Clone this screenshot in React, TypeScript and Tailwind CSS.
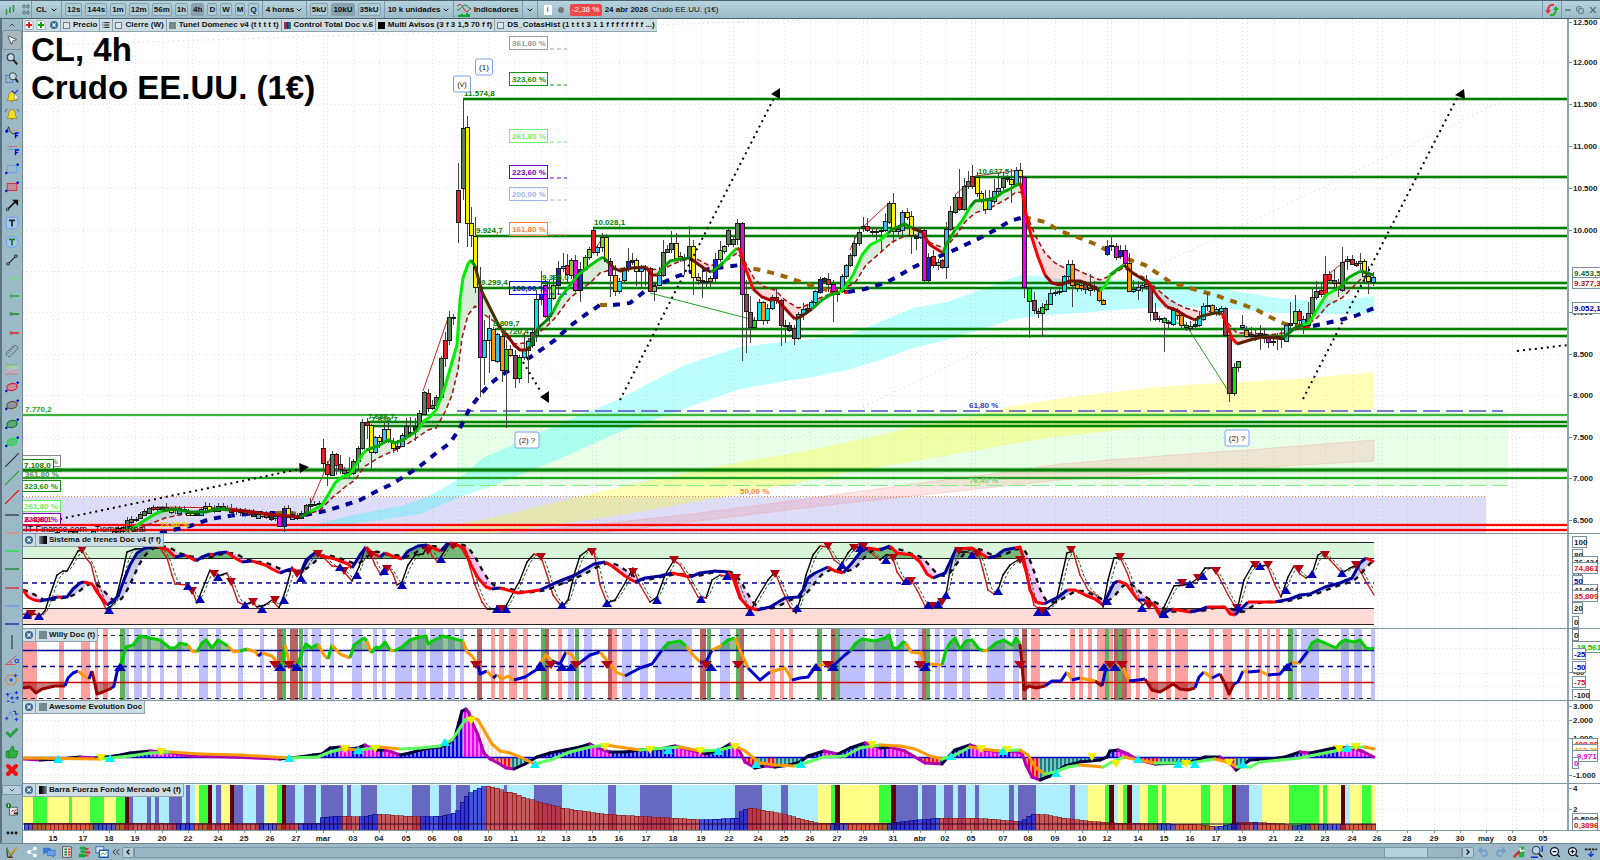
import type { ReactNode } from "react";
import { ChevronDown, ChevronUp, ChevronsLeft, ChevronLeft, ChevronRight, List, Minus, Copy, X, MousePointer2, Undo2, Redo2, ZoomIn, ZoomOut, Ruler, Share2, ThumbsUp, Check, Ellipsis } from "lucide-react";

type Pt = [number, number];
type Seg = { c: string; pts: Pt[] };

const GREEN = "#008000";

const toPts = (s: string): Pt[] => s.trim().split(/\s+/).map((p) => p.split(",").map(Number) as Pt);
const toSegs = (s: string): Seg[] =>
  s.trim().split("|").map((part) => {
    const [c, rest] = part.trim().split(":");
    return { c, pts: toPts(rest) };
  });
const join = (segs: Seg[]) => segs.flatMap((s) => s.pts);
const str = (pts: Pt[]) => pts.map((p) => p.join(",")).join(" ");

// linear interpolation of a series at x
const at = (pts: Pt[], x: number) => {
  if (x <= pts[0][0]) return pts[0][1];
  for (let i = 1; i < pts.length; i++) {
    if (x <= pts[i][0]) {
      const [x0, y0] = pts[i - 1];
      const [x1, y1] = pts[i];
      return x1 === x0 ? y1 : y0 + ((y1 - y0) * (x - x0)) / (x1 - x0);
    }
  }
  return pts[pts.length - 1][1];
};

const range = (a: number, b: number, step: number) => {
  const out: number[] = [];
  for (let x = a; x < b; x += step) out.push(x);
  return out;
};

const lag = (pts: Pt[], n: number): Pt[] =>
  range(23, 1374, 3).map((x) => {
    const v = range(0, n, 2).map((k) => at(pts, x - k));
    return [x, v.reduce((a, b) => a + b, 0) / v.length];
  });

/* ---------- data ---------- */

const DAYS: [number, string][] = [
  [53, "15"], [83, "17"], [109, "18"], [135, "19"], [162, "20"], [188, "22"], [218, "24"], [244, "25"], [270, "26"], [296, "27"],
  [323, "mar"], [353, "03"], [379, "04"], [406, "05"], [432, "06"], [458, "08"], [488, "10"], [514, "11"], [541, "12"], [566, "13"],
  [592, "15"], [619, "16"], [646, "17"], [673, "18"], [701, "19"], [729, "22"], [758, "24"], [784, "25"], [810, "26"], [837, "27"],
  [863, "29"], [893, "31"], [920, "abr"], [945, "02"], [971, "05"], [1003, "07"], [1028, "08"], [1055, "09"], [1082, "10"], [1107, "12"],
  [1138, "14"], [1164, "15"], [1190, "16"], [1216, "17"], [1242, "19"], [1273, "21"], [1299, "22"], [1325, "23"], [1352, "24"], [1377, "26"],
  [1407, "28"], [1434, "29"], [1460, "30"], [1486, "may"], [1512, "03"], [1543, "05"],
];
const EXTRA_DAYS = [26, 57, 192, 327, 462, 596, 733, 867, 975, 1111, 1247, 1382, 1516];

const CANDLE_COLORS: Record<string, string> = {
  g: "#5c7c5c", r: "#ee1c24", y: "#ffee00", m: "#f000f0", c: "#00e5ee", s: "#36bff5", o: "#ff9800",
  l: "#00ee00", G: "#7ed048", b: "#2222d8", p: "#8a4456", k: "#333333",
};

// x high top bottom low colour
const CANDLES = `
57 531 532 533 533 r;70 530 531 533 533 o;75 530 531 533 533 g;93 530 531 533 533 c;114 529 531 533 533 o;118 526 528 533 533 g;123 524 527 531 533 g;
127 517 520 529 531 g;131 516 519 522 524 g;136 517 519 520 522 g;140 512 514 518 519 g;144 509 511 515 516 g;149 507 508 513 514 g;153 505 507 509 511 r;157 506 507 509 512 r;162 506 507 509 511 k;166 503 507 509 511 r;
171 507 508 512 514 y;175 506 508 510 514 g;179 506 508 513 515 s;184 506 509 510 512 k;188 509 513 515 516 y;192 511 513 515 516 y;197 510 513 515 516 k;201 507 509 515 516 s;205 502 506 508 511 g;209 503 506 510 511 y;214 505 508 511 513 s;
218 503 506 511 512 g;223 503 506 508 510 g;227 505 508 509 511 y;231 504 509 512 517 r;236 507 509 511 515 k;240 508 510 512 516 y;245 508 510 513 517 g;249 509 511 514 516 r;253 509 512 516 517 k;258 512 514 518 519 s;262 511 513 516 518 o;266 511 514 517 519 r;
271 512 515 519 521 k;275 512 516 518 521 s;279 513 516 526 527 m;284 506 508 526 532 b;288 505 508 517 518 y;292 511 514 519 520 s;297 513 515 518 520 r;301 511 513 518 519 b;306 504 505 514 516 g;310 498 504 506 510 k;314 501 504 505 506 g;319 501 503 504 506 g;
323 439 448 463 470 r;327 461 464 474 486 r;332 451 454 475 476 g;336 453 454 465 475 r;340 455 464 469 474 r;344 467 470 473 479 g;349 457 472 474 477 k;353 459 461 473 475 g;358 446 448 461 470 g;362 419 422 448 450 g;367 418 422 425 439 r;
371 424 425 452 470 y;375 436 437 452 454 s;379 435 437 441 448 y;384 423 429 442 444 s;388 420 429 441 443 y;393 438 441 448 453 y;397 440 446 448 452 k;402 433 435 446 447 s;406 418 426 436 438 g;410 417 432 434 437 k;415 418 426 430 441 k;419 410 413 426 428 g;
424 391 392 414 415 g;428 389 393 408 412 r;432 400 405 408 410 g;436 395 397 405 409 g;441 356 358 397 400 g;445 332 340 358 367 r;449 311 317 340 345 g;453 314 317 318 325 k;
458 163 190 222 243 r;463 99 128 188 200 g;467 116 127 223 247 y;471 207 223 235 247 y;475 217 236 287 293 y;480 267 287 357 397 m;484 320 340 357 385 c;489 315 328 340 373 s;493 327 329 360 361 o;497 333 334 361 363 s;502 333 336 370 382 o;
506 340 349 370 428 l;510 345 349 355 357 o;515 350 355 378 388 p;519 355 357 378 383 l;524 333 349 357 360 c;528 338 341 350 383 c;532 328 332 345 348 p;536 290 299 335 342 c;541 271 294 299 305 b;545 280 285 316 318 m;549 280 298 316 322 c;
553 275 285 298 300 G;558 261 268 285 295 b;563 253 266 268 272 s;567 254 265 274 282 r;571 258 260 275 279 G;575 255 260 290 292 m;580 262 269 290 302 b;585 255 257 269 271 G;589 247 249 257 260 G;593 229 230 252 254 r;597 245 247 252 256 s;602 233 237 247 252 G;
606 234 237 261 263 y;610 258 261 275 297 m;615 265 275 291 296 o;619 278 281 291 294 c;624 267 269 280 282 s;628 248 261 269 272 b;632 253 260 262 265 k;636 258 260 271 286 y;641 265 267 271 287 s;645 265 267 269 286 k;650 267 268 291 292 r;654 283 286 291 301 G;
659 267 275 285 286 s;663 240 252 275 277 g;667 245 249 252 253 g;671 231 243 249 253 g;676 233 243 258 261 y;680 252 256 258 262 y;684 254 257 258 275 k;689 226 246 257 270 g;693 240 246 277 295 y;698 273 277 280 285 o;702 265 280 282 298 k;706 272 281 282 287 o;
710 276 278 281 287 o;715 253 259 278 283 b;720 241 250 259 262 G;724 245 246 251 254 G;728 229 230 244 247 g;733 237 239 244 247 g;737 219 223 239 245 g;742 222 223 294 361 m;746 280 294 311 353 p;750 296 312 327 343 p;754 317 320 327 328 l;
759 299 302 320 321 c;763 301 302 320 325 o;767 304 308 320 324 c;772 295 297 308 310 c;776 288 297 300 304 o;781 299 300 325 346 p;785 320 325 326 343 k;789 322 325 330 332 k;794 325 328 338 345 p;798 312 314 338 340 c;
803 303 309 314 320 c;807 305 308 310 314 k;811 300 302 308 310 c;815 290 291 302 304 c;820 277 279 292 294 b;824 277 278 281 283 k;828 273 279 284 292 r;833 280 284 291 322 m;837 289 291 294 302 k;842 274 276 291 293 s;846 264 265 276 279 s;
850 253 255 265 267 g;854 236 243 255 257 g;859 228 232 243 246 g;863 217 226 228 232 k;867 218 226 230 232 r;872 228 231 232 236 k;876 227 231 232 243 k;881 227 230 231 251 k;885 213 221 230 232 s;889 201 203 222 224 g;893 193 203 231 243 y;
898 226 229 231 235 s;902 210 212 230 235 s;907 208 212 217 220 y;911 211 216 235 254 y;916 235 236 238 250 k;920 227 230 237 239 s;924 228 230 280 282 m;928 253 257 280 282 b;933 250 256 265 268 r;938 259 262 265 270 G;942 259 260 267 269 r;
946 222 229 267 279 s;950 206 211 229 231 g;955 195 197 212 214 g;959 169 197 209 211 r;964 178 186 209 211 g;968 171 181 186 189 g;972 165 176 186 189 r;977 172 177 193 197 y;981 191 193 199 203 y;985 190 199 209 214 y;989 190 200 209 210 s;
994 179 191 201 204 s;998 173 188 191 194 s;1003 172 178 187 190 g;1007 175 177 179 182 k;1011 169 179 184 203 y;1016 167 170 185 187 s;1020 163 170 176 187 y;1024 176 177 287 298 m;1029 287 288 301 338 l;1034 292 300 310 314 p;
1038 308 311 313 318 p;1042 303 307 313 337 l;1046 300 304 309 311 l;1050 288 293 304 305 c;1055 290 292 293 296 k;1059 289 291 292 295 k;1064 275 276 291 292 c;1068 260 264 276 280 c;1072 260 264 285 307 o;1077 280 284 288 292 o;1081 281 285 288 291 o;
1085 281 284 289 294 p;1090 274 288 290 296 o;1094 281 286 289 292 s;1099 287 289 300 302 o;1103 299 300 304 305 o;1107 240 246 254 256 b;1111 237 245 246 251 k;1116 243 246 257 260 m;1120 245 250 256 259 b;1125 245 250 263 266 m;1129 253 263 291 292 o;
1133 280 289 291 293 c;1138 281 287 290 300 s;1142 283 285 287 292 c;1146 275 284 286 290 o;1150 284 286 312 321 p;1155 303 312 319 321 p;1159 316 318 319 322 k;1164 317 318 322 352 l;1168 320 322 323 328 k;1173 307 310 324 326 c;
1177 308 310 315 320 o;1181 312 315 325 330 o;1186 322 325 327 331 l;1190 321 326 328 331 l;1195 318 324 326 328 k;1199 311 316 325 327 c;1203 303 306 319 321 c;1207 293 305 306 311 k;1212 304 305 312 315 o;1216 307 309 313 316 c;1221 306 308 311 315 c;
1225 307 308 335 337 p;1229 335 335 393 402 p;1234 363 367 393 396 l;1238 361 361 367 372 l;1242 315 325 327 330 c;1246 326 330 336 338 o;1251 327 334 336 338 k;1255 330 335 336 341 k;1260 325 333 335 350 k;1264 328 334 338 343 k;1268 334 336 342 348 m;
1273 334 341 342 346 o;1277 333 336 338 350 k;1281 330 337 339 348 k;1286 323 325 341 342 c;1290 302 323 325 328 k;1295 295 311 323 326 G;1299 309 311 320 325 r;1303 316 319 326 334 s;1308 302 313 325 327 g;1312 289 297 313 316 g;1316 281 291 297 300 g;
1321 283 290 294 297 r;1325 256 274 294 296 r;1329 271 274 280 282 r;1334 270 280 283 288 p;1338 279 283 289 297 y;1342 247 262 290 292 g;1347 256 259 261 270 g;1352 255 259 264 265 r;1356 261 263 265 267 r;1360 253 261 263 270 G;1364 259 261 276 283 y;
1368 266 276 281 294 y;1373 272 277 282 286 s`
  .trim().split(";").map((row) => {
    const [x, hi, top, bot, lo, c] = row.trim().split(" ");
    return { x: +x, hi: +hi, top: +top, bot: +bot, lo: +lo, c };
  });

const FAST = toSegs(`#00e000:125,531 135,527 145,520 155,514 162,511|#008c00:175,509 190,512 205,512 218,509 230,510|#a00000:245,511 260,513 275,515 290,516 300,517|#008c00:310,512|#00f000:322,505 328,495 335,483 342,477 350,474 356,465 362,455 366,450|#00a800:378,446 388,440 395,443 403,440 412,434 418,430|#00f000:424,421 430,417 436,410 444,390 452,362 457,345 460,300 463,278 468,264 471,260|#008c00:475,266|#4a3000:482,292 490,308 497,322 502,330|#8b0000:508,336 514,345 520,350 526,350|#4a3000:530,347|#0a7a0a:538,328 547,320 553,312|#00c800:560,298 568,288 578,275 588,267 598,260 603,257|#0a7a0a:608,262|#5a2000:614,268 620,271 632,268 646,267|#a00000:652,275 657,275|#00a800:663,268 670,261 680,259|#0a7a0a:690,258|#6a1500:698,264 705,269 711,272|#00a800:718,267 724,262|#00e000:730,255 737,248|#ff0000:740,250 743,262 748,275 753,289|#a00000:762,297 770,300 776,299 782,305 790,314 795,319|#5a2000:802,316 812,309|#00a800:822,300 830,295 840,292|#00f000:845,287 853,275 862,255 870,245 880,240 888,233|#008c00:893,229 905,224 912,228|#5a2000:922,232|#d00000:930,245 943,253|#00a800:946,245 955,230|#00e000:962,221 970,207|#008c00:975,201 985,200 995,198|#00a800:1003,192 1010,189 1020,183|#ff0000:1022,190 1026,215 1031,235 1038,257 1045,275|#a00000:1052,283 1060,285|#6a1500:1070,281 1080,281 1090,285 1100,291|#00f000:1106,285 1110,275|#00a800:1118,269 1124,265|#6a1500:1134,274 1146,281|#d00000:1150,285 1158,297 1167,307|#8b0000:1176,310 1186,316 1195,320|#4a3000:1202,316 1215,313 1222,313|#ff0000:1226,323 1232,338 1237,344|#5a2000:1250,340 1262,337 1275,338 1283,338|#0a7a0a:1295,328 1303,325|#00f000:1309,323 1318,308 1326,295 1335,290|#00a800:1342,286 1348,278 1355,274 1361,271|#0a7a0a:1373,275`);

const SLOW = toPts(`125,535 145,526 165,518 185,514 205,512 218,510 240,510 270,515 300,517 320,510 332,498 345,487 355,480 365,466 380,457 395,450 407,444 418,437 428,430 436,428 445,412 452,395 458,370 462,338 468,315 475,306 485,315 495,322 505,336 515,344 525,343 535,335 545,328 555,318 570,298 580,290 590,283 600,273 610,270 625,268 650,270 665,268 680,261 695,258 708,265 720,265 730,258 737,253 745,262 755,280 765,287 775,290 785,300 798,308 805,306 820,298 840,290 855,283 866,265 880,253 892,242 905,236 915,235 925,240 935,245 945,248 955,237 965,222 975,213 990,208 1005,200 1015,193 1021,192 1027,215 1035,235 1045,253 1055,263 1065,268 1075,269 1090,276 1100,280 1110,276 1123,268 1132,272 1145,278 1158,290 1170,300 1185,308 1200,312 1215,311 1225,320 1237,333 1250,333 1270,335 1290,332 1305,326 1317,318 1328,305 1342,298 1352,288 1362,278 1373,278`);

const TREND = toSegs(`#000096:160,533 190,526 210,519 235,515 258,513 275,513|#996600:290,513 305,515|#000096:325,511 345,505 360,500 375,492 390,485 405,476 420,466 435,454 450,443 460,428 470,408 480,395 490,384 500,376 510,370 520,364 532,356 545,347 555,340 570,326 585,315 600,305|#996600:613,305|#000096:630,303 645,291 660,284 675,277 690,272 710,269 725,267 740,265|#996600:750,268 765,271 780,275 795,280 810,285 830,291|#ff0000:848,292|#000096:865,289 885,283 895,278 910,269 922,263 935,258 950,252 965,245 980,238 995,230 1010,221 1024,217|#996600:1045,222 1060,231 1080,238 1095,244 1110,252 1130,260 1145,265 1160,275 1170,282 1190,288 1200,291 1215,295 1235,302 1255,309 1270,317 1285,324 1303,326|#ff0000:1313,326|#000096:1340,320 1355,316 1374,308`);

const CYAN_BAND = "240,532 300,528 353,515 400,506 420,500 440,490 460,478 483,458 550,428 573,418 617,400 667,374 685,365 700,360 740,347 780,342 813,339 847,335 880,322 913,308 947,302 980,290 1020,275 1047,277 1080,282 1113,280 1147,278 1180,281 1217,287 1240,292 1277,298 1310,301 1343,300 1374,296 1374,313 1343,314 1310,314 1277,313 1240,310 1217,308 1180,307 1147,308 1113,310 1080,313 1047,315 1013,319 980,330 947,340 913,348 880,360 847,370 813,377 780,382 740,389 700,403 617,433 557,460 500,483 460,497 420,514 353,524 280,532";
const YELLOW_BAND = "400,533 450,526 500,516 560,501 620,487 700,470 740,462 800,452 867,438 913,427 963,418 1013,406 1063,398 1113,392 1147,388 1200,384 1240,382 1310,378 1374,372 1374,409 1343,413 1260,418 1187,424 1147,427 1047,438 950,455 850,472 740,494 620,515 500,533";
const RED_BAND = "500,533 600,524 700,513 820,497 920,483 1000,473 1060,464 1160,456 1260,449 1374,440 1374,461 1250,468 1060,480 950,492 820,506 700,521 600,533";

// y, x start, stroke width, colour
const LEVELS: [number, number, number, string][] = [
  [99, 463, 3, GREEN], [177, 975, 3, GREEN], [228, 593, 3, GREEN], [236, 475, 3, GREEN], [283, 541, 3, GREEN], [288, 480, 3, GREEN],
  [329, 495, 3, GREEN], [336, 502, 3, GREEN], [415, 23, 2, "#3cb43c"], [422, 367, 3, GREEN], [426, 371, 3, GREEN], [470, 23, 4, GREEN],
  [478, 23, 2, "#22a022"], [525, 23, 2, "#ff0000"], [530, 23, 2, "#ff0000"],
];

const FIBS: [number, string, string][] = [
  [43, "361,80 %", "#999999"], [79, "323,60 %", "#109010"], [136, "261,80 %", "#70f070"], [172, "223,60 %", "#8000c0"],
  [194, "200,00 %", "#9db4ec"], [229, "161,80 %", "#ff7f40"], [288, "100,00 %", "#0000dd"],
];

const TRAIN = toSegs(`r:23,590 28,597 34,600 40,601|b:50,599 57,597|r:62,597|b:67,597 73,589 80,583 84,582|r:92,584 97,592 103,600 107,605|b:113,601 118,596 124,580 130,565 137,553 145,548 155,545|r:160,547 168,550 175,557|b:185,555|r:196,561|b:202,557 210,554|r:213,555|b:218,553 227,552|r:235,558 242,562|b:252,561|r:265,565 272,569 280,573|b:285,571 291,569|r:298,572|b:301,572 306,560 315,553|r:322,556 335,559 348,564 352,568|b:360,555 366,547|r:372,553 380,557|b:385,553|r:392,556 402,559|b:408,551 418,546 427,545|r:435,549 441,551|b:447,544 452,543|r:464,548 470,563 478,578 486,587 492,589|b:500,588|r:518,593 540,590|b:555,583 575,575 594,564 605,562|r:612,566 625,576 635,582|b:645,578 660,576 672,573|r:690,577|b:700,573 715,571 728,572|r:733,578 740,598 748,607 757,610|b:770,607 785,598 798,597 803,590 808,578 815,573 828,567|r:835,571 843,573|b:852,563 862,550 868,548|r:880,550|b:890,546|r:897,553 912,555 920,562 927,574 933,578|b:945,573 952,558 956,549|r:972,548 980,553 988,558|b:996,556 1004,550 1015,548|r:1020,547 1024,560 1030,590 1036,602 1044,604|b:1050,601 1060,596 1067,590|r:1075,590 1085,595 1095,599 1103,605|b:1108,595 1114,583 1118,581|r:1126,584 1132,592 1138,600|b:1145,600|r:1155,606 1160,615|b:1172,609|r:1190,612|b:1200,610 1207,607|r:1225,607 1230,614 1235,615|b:1242,608 1248,602|r:1275,602|b:1290,599 1300,595 1310,594 1325,587 1340,583 1352,578 1360,563 1366,558|r:1374,562`);
const TRAIN_PTS = join(TRAIN);
const TRAIN_LAG = lag(TRAIN_PTS, 18);

const OSC = toPts(`23,614 28,615 35,614 40,616 45,611 50,595 57,575 63,571 67,571 72,562 78,551 82,550 86,558 91,564 95,580 100,597 106,609 110,607 115,602 122,575 127,552 135,549 160,548 167,558 172,575 175,584 187,585 192,590 197,603 202,590 210,570 214,575 218,576 227,573 232,585 238,602 244,605 252,602 257,607 265,605 272,600 279,608 285,592 292,567 297,572 301,575 307,562 315,552 322,556 332,566 340,567 345,573 352,581 359,567 365,549 370,552 375,565 381,575 388,566 393,574 397,585 402,582 408,565 415,555 423,554 428,545 432,556 438,562 442,555 449,544 460,546 468,560 475,585 482,602 487,609 498,609 505,608 513,593 520,580 527,562 534,554 541,557 547,575 553,595 562,607 568,600 574,575 580,556 588,550 594,552 600,585 607,603 615,600 625,583 633,568 640,585 650,602 657,597 665,575 674,560 680,565 690,582 698,597 706,598 712,580 720,575 735,578 742,600 750,612 756,600 768,580 775,572 782,590 790,607 796,613 800,600 806,575 813,555 820,546 828,547 834,560 841,565 848,553 853,547 862,547 870,552 880,560 886,555 892,555 897,572 904,582 911,580 917,590 925,606 932,607 940,603 946,595 950,570 955,551 960,552 968,552 972,555 978,552 983,570 988,590 994,594 998,590 1003,575 1010,565 1018,560 1022,561 1028,580 1034,605 1042,612 1048,608 1056,602 1062,575 1067,553 1073,551 1080,575 1088,590 1096,595 1103,607 1108,580 1114,558 1120,557 1128,575 1135,597 1143,605 1150,600 1160,617 1165,605 1174,586 1190,584 1198,578 1205,568 1212,568 1218,575 1228,595 1237,610 1244,580 1252,566 1262,566 1267,565 1275,585 1281,597 1288,577 1294,566 1300,574 1306,578 1312,574 1318,555 1323,552 1330,560 1342,573 1350,568 1357,565 1365,580 1374,595`);
const OSC_DOWN = "31,614 82,550 192,591 214,574 231,582 253,602 275,600 297,574 318,554 344,571 371,555 387,569 428,551 453,546 501,609 541,557 592,552 633,572 674,560 736,578 775,574 828,546 854,548 863,547 893,558 911,581 932,606 942,602 959,551 977,554 1020,560 1042,611 1071,550 1120,557 1149,606 1182,583 1198,578 1216,571 1237,608 1255,565 1268,565 1299,569 1325,555 1356,565";
const OSC_UP = "27,615 39,616 109,610 188,586 200,599 218,577 245,605 262,609 284,600 301,578 340,567 357,575 384,571 402,585 441,559 497,609 506,609 562,605 607,603 657,600 701,599 727,576 750,612 797,608 842,565 860,548 886,560 906,581 928,605 938,604 946,595 972,555 998,591 1038,612 1046,612 1107,601 1142,608 1164,614 1190,584 1203,576 1238,607 1260,566 1286,590 1312,574 1342,573";

const WILLY = toSegs(`d:23,688 30,687 36,693 42,689 55,686 65,686|b:68,678 73,673 78,671|o:84,676 89,679|b:92,671|d:94,680 97,694 103,692 112,688|b:114,686 117,672 121,664|g:126,647 133,645 140,636 150,638 160,640 170,648 175,648 180,643 188,645|o:192,651 197,652|g:202,643 206,640 212,648 218,640 228,646|o:234,652 240,651|g:247,649|o:256,652 258,656|b:262,653|o:272,656 278,664|g:282,664 285,645|o:290,666|b:296,666|g:298,663 303,650 306,644 311,648 318,644|o:324,655 328,659|g:332,645|o:340,654 350,658|g:354,645 364,638 367,641|o:371,653|g:376,647 380,648 385,642 390,650|o:394,651|g:402,647 410,640 420,637 426,636 428,644 434,640 443,636 455,639 463,641|o:467,652 472,656 478,665|b:480,674 487,671|o:493,678|b:497,675|o:502,679 508,676 514,680|b:525,677 536,670 541,662|o:546,655 552,661|b:560,664 566,652|o:572,655 577,665|b:590,655 600,652|o:608,662 616,672 625,676|b:640,668 652,664 662,650|g:668,643 680,641 686,646|o:693,655 700,662|b:706,662 712,650|o:722,645|g:728,640 735,638|o:742,655 748,668|b:760,680 770,672|o:785,668 792,680|b:800,678 808,677 816,666|o:827,664|b:833,666 845,655 850,651|g:856,643 862,639 875,641 885,638 889,635 893,648 898,648 903,642 906,643|o:911,652 918,653 921,652 924,665|b:930,664|o:942,665|g:946,650 950,643 955,638 960,649 966,641 972,640 978,648 983,651|o:988,650|g:996,643 1004,640 1012,645 1016,638 1020,644|d:1022,665 1024,690 1029,686 1036,688 1045,686|b:1052,681 1061,681 1067,672|o:1072,680|b:1080,678|o:1095,681|d:1102,686|b:1106,668|o:1112,665 1122,666 1129,681|b:1138,680 1145,679|d:1152,690 1160,692 1167,688 1173,684 1180,689 1188,690 1195,688|b:1199,677 1204,672|o:1212,678|b:1220,674|d:1225,684 1229,694 1234,684|b:1238,682 1243,671|o:1248,672|b:1260,671|o:1268,675|b:1280,674 1285,668 1292,663|o:1299,663|b:1308,651|g:1312,643 1317,640 1325,643 1336,648 1341,642 1345,640 1354,642 1360,640 1366,648 1370,649 1374,648`);
const WILLY_PTS = join(WILLY);

// colour followed by x ranges
const WILLY_BANDS: [string, string][] = [
  ["#ffa0a0", "23-37 59-64 81-90 95-98 103-108 491-495 499-504 509-517 523-528 558-562 612-617 770-775 780-784 789-793 1031-1040 1070-1075 1079-1083 1088-1092 1097-1105 1109-1113 1127-1131 1136-1140 1148-1158 1166-1171 1175-1188 1209-1214 1223-1232 1245-1249 1258-1262 1267-1270 1276-1280"],
  ["#c0c0ff", "125-129 134-142 147-151 160-164 177-182 199-208 216-221 238-243 260-264 304-308 312-321 330-334 352-362 373-377 382-386 395-412 417-426 430-443 448-455 460-464 568-574 584-592 622-632 640-648 655-692 720-730 840-865 874-891 896-904 918-922 935-940 944-957 962-970 987-1005 1013-1019 1293-1297 1301-1319 1341-1349 1354-1362 1371-1375"],
  ["#60b060", "120-125 282-286 299-303 541-545 575-579 707-711 736-740 817-822 835-840 926-930 1105-1109 1118-1122 1288-1293"],
  ["#b86464", "277-282 290-298 477-482 545-549 608-612 700-706 740-744 831-835 922-926 1022-1027 1114-1118 1122-1127"],
];

const AO = toPts(`23,759 40,760 60,759 80,757 95,758 115,756 130,753 150,751 165,752 190,756 230,757 280,759 300,757 313,755 322,754 330,748 340,747 350,749 358,748 365,745 375,750 385,750 392,752 400,755 410,753 420,750 430,748 440,747 448,744 455,737 459,722 462,711 466,709 469,713 472,722 478,735 484,753 490,759 498,763 506,768 514,769 525,764 537,757 550,753 565,750 580,747 590,744 600,749 610,752 625,752 640,750 660,749 675,746 690,750 705,754 718,751 730,744 738,748 745,762 755,768 765,766 775,767 790,765 800,762 808,756 824,751 838,754 850,748 865,743 880,748 890,747 905,751 915,757 925,763 942,764 948,757 955,750 970,745 985,750 1000,752 1010,751 1022,753 1026,765 1032,777 1040,780 1050,776 1065,766 1080,762 1100,760 1107,757 1110,751 1118,750 1128,754 1138,760 1155,764 1180,763 1195,761 1205,757 1220,757 1230,763 1236,770 1243,765 1250,760 1270,759 1285,757 1300,752 1310,753 1325,750 1338,747 1352,748 1362,751 1374,757`);
const AO_SIGNAL = toPts(`23,758 100,759 130,756 150,753 170,752 200,754 240,755 290,758 318,757 330,752 342,749 360,750 380,747 400,749 420,748 440,746 452,740 460,728 465,720 472,717 478,720 485,732 492,744 500,751 510,753 520,757 535,764 550,760 570,752 590,747 605,745 640,750 680,747 700,751 720,750 735,746 745,751 760,763 775,765 795,766 808,762 824,757 845,756 860,748 880,745 900,746 915,749 930,756 942,759 955,755 970,747 982,749 1000,751 1020,750 1028,755 1036,768 1045,774 1055,772 1068,767 1080,765 1103,767 1112,762 1124,757 1138,760 1155,763 1190,763 1215,759 1230,763 1237,767 1250,767 1260,762 1280,760 1300,758 1320,754 1340,750 1355,747 1365,747 1374,749`);

const FORCE_BG = `Y24 G33 Y47 G69 Y72 G90 Y104 G116 D125 P129 C133 P147 C151 P155 C159 P169 C182 P186 C190 Y195 G199 D208 C212 P216 C221 Y222 D230 P234 C243 P256 C264 Y265 G277 D282 P286 C295 P304 C316 P321 C343 P347 C351 P361 C377 P412 C430 P439 C451 P456 C470 P504 C507 P534 C562 P608 C616 P640 C672 P735 C762 P781 C788 Y818 G831 D835 Y840 G879 D891 P896 C918 P922 C936 P944 C953 P958 C966 P975 C979 P1009 C1014 P1018 C1036 P1070 C1075 Y1088 G1105 D1109 C1114 Y1118 G1123 D1127 C1132 Y1140 G1148 Y1158 G1162 Y1166 G1201 Y1210 G1223 D1232 P1236 C1249 Y1262 G1289 Y1319 G1323 Y1327 D1341 C1345 Y1350 G1362 Y1371 E1376`
  .split(" ").map((s) => [s[0], +s.slice(1)] as [string, number]);
const FORCE_COLORS: Record<string, string> = { Y: "#ffff88", G: "#3cff3c", D: "#600000", P: "#6868c0", C: "#aeeefe" };
const FORCE = toPts(`23,823 300,824 317,823 320,818 325,817 342,816 360,817 375,814 400,816 420,817 440,816 450,814 455,812 458,806 463,797 470,792 478,788 484,786 490,787 500,790 505,793 510,792 520,797 540,803 560,808 600,814 650,817 700,820 735,818 740,810 747,808 770,812 800,819 815,823 890,823 905,821 940,818 970,818 1000,820 1020,822 1028,815 1033,814 1045,815 1060,818 1085,821 1110,823 1170,824 1190,824 1215,827 1230,824 1240,822 1250,822 1280,824 1290,826 1310,824 1330,825 1374,824`);

/* ---------- drawing helpers ---------- */

const Segments = ({ segs, width, colors, dash }: { segs: Seg[]; width: number; colors?: Record<string, string>; dash?: string }) => (
  <>
    {segs.map((s, i) => {
      const prev = i ? segs[i - 1].pts[segs[i - 1].pts.length - 1] : null;
      const pts = prev ? [prev, ...s.pts] : s.pts;
      return <polyline key={i} points={str(pts)} fill="none" stroke={colors ? colors[s.c] : s.c} strokeWidth={width} strokeDasharray={dash} strokeLinejoin="round" />;
    })}
  </>
);

// polyline coloured by direction of every step
const TwoTone = ({ pts, up, down, width }: { pts: Pt[]; up: string; down: string; width: number }) => (
  <>
    {pts.slice(1).map((p, i) => (
      <line key={i} x1={pts[i][0]} y1={pts[i][1]} x2={p[0]} y2={p[1]} stroke={p[1] <= pts[i][1] ? up : down} strokeWidth={width} strokeLinecap="round" />
    ))}
  </>
);

const Between = ({ a, b, from, to, above, below }: { a: Pt[]; b: Pt[]; from: number; to: number; above: string; below: string }) => (
  <>
    {range(from, to, 3).map((x) => {
      const [a0, a1, b0, b1] = [at(a, x), at(a, x + 3), at(b, x), at(b, x + 3)];
      return <polygon key={x} points={`${x},${a0} ${x + 3},${a1} ${x + 3},${b1} ${x},${b0}`} fill={a0 < b0 ? above : below} shapeRendering="crispEdges" />;
    })}
  </>
);

const Triangles = ({ at: where, dir, fill, size = 5 }: { at: string; dir: "up" | "down"; fill: string; size?: number }) => (
  <>
    {toPts(where).map(([x, y], i) => {
      const s = dir === "up" ? -1 : 1;
      return <polygon key={i} points={`${x - size},${y - s * 4} ${x + size},${y - s * 4} ${x},${y + s * 4}`} fill={fill} />;
    })}
  </>
);

const Grid = ({ top, bottom, rows }: { top: number; bottom: number; rows: number[] }) => (
  <g stroke="#e4e4e4" strokeDasharray="1 3" shapeRendering="crispEdges">
    {[...DAYS.map((d) => d[0]), ...EXTRA_DAYS].map((x) => <line key={x} x1={x + 0.5} x2={x + 0.5} y1={top} y2={bottom} />)}
    {rows.map((y) => <line key={y} x1="23" x2="1568" y1={y + 0.5} y2={y + 0.5} />)}
  </g>
);

const Tag = ({ x, y, w, text, color, border = "#7890a0" }: { x: number; y: number; w: number; text: string; color: string; border?: string }) => (
  <g>
    <rect x={x + 0.5} y={y - 5.5} width={w} height="11" fill="#fff" stroke={border} />
    <text x={x + 2} y={y + 3} fill={color}>{text}</text>
  </g>
);

const Axis = ({ ticks, children }: { ticks: [number, string][]; children?: ReactNode }) => (
  <g>
    {ticks.map(([y, t]) => (
      <g key={y}>
        <line x1="1569" x2="1572" y1={y + 0.5} y2={y + 0.5} stroke="#78909c" />
        <text x="1573" y={y + 3} fill="#222">{t}</text>
      </g>
    ))}
    {children}
  </g>
);

type PanelProps = { top: number; height: number; grow: string; title?: string; swatch?: string; children: ReactNode };

const Panel = ({ top, height, grow, title, swatch, children }: PanelProps) => (
  <section className={`relative min-h-0 w-full overflow-hidden bg-white ${grow}`}>
    <svg className="block h-full w-full" viewBox={`23 ${top} 1577 ${height}`} preserveAspectRatio="none" fontFamily="Liberation Sans, sans-serif" fontSize="8" fontWeight="bold">
      {children}
      <line x1="1568" x2="1568" y1={top} y2={top + height} stroke="#8ea3ae" strokeWidth="2" />
      <line x1="23" x2="1600" y1={top + height - 0.5} y2={top + height - 0.5} stroke="#7f96a1" />
    </svg>
    {title && (
      <div className="absolute top-0 left-0 flex h-[13px] items-center border border-t-0 border-l-0 border-[#8ea3ae] bg-[#cddde4]">
        <button aria-label={`Cerrar ${title}`} className="flex h-full w-[13px] items-center justify-center border-r border-[#8ea3ae]"><CloseDot /></button>
        <span className={`mr-0.5 ml-[3px] h-2 w-2 ${swatch}`} />
        <span className="pr-0.5">{title}</span>
      </div>
    )}
  </section>
);

const CloseDot = () => (
  <svg className="h-2 w-2" viewBox="0 0 10 10">
    <circle cx="5" cy="5" r="5" fill="#3d6a96" />
    <path d="M3 3l4 4M7 3l-4 4" stroke="#fff" strokeWidth="1.5" />
  </svg>
);

/* ---------- panels ---------- */

const PricePanel = () => (
  <Panel top={19} height={515} grow="flex-[515_1_0px]">
    <Grid top={19} bottom={534} rows={[22, 62, 104, 146, 188, 230, 271, 312, 354, 395, 437, 478, 520]} />
    <rect x="457" y="412" width="1051" height="74" fill="#00ff00" fillOpacity="0.09" />
    <rect x="23" y="497" width="1463" height="36" fill="#7878e0" fillOpacity="0.25" />
    <polygon points={CYAN_BAND} fill="#00ffff" fillOpacity="0.26" />
    <polygon points={YELLOW_BAND} fill="#ffff00" fillOpacity="0.28" />
    <polygon points={RED_BAND} fill="#ff5050" fillOpacity="0.15" stroke="#ff9090" strokeOpacity="0.3" />
    <g fill="none" stroke="#d0d0d0" strokeDasharray="1 4">
      <path d="M23 46L420 33L800 20M800 437L1505 100M528 350L568 386" />
    </g>
    <line x1="457" x2="1503" y1="411" y2="411" stroke="#5050c8" strokeWidth="1.5" strokeDasharray="17 6" />
    <line x1="457" x2="1508" y1="485.5" y2="485.5" stroke="#80f080" strokeDasharray="17 6" />
    <line x1="23" x2="1486" y1="496.5" y2="496.5" stroke="#ff8040" strokeDasharray="1 2" />

    <g fill="none" strokeWidth="1">
      <path d="M310 505L332 454M157 507L230 508L300 517M423 391L448 318M593 252L604 236M864 226L889 203M850 250L858 232M955 195L976 176L1020 170M1329 274L1346 260" stroke="#cc2020" />
      <path d="M650 293L754 320M1164 320L1186 325L1229 392" stroke="#22a022" />
    </g>

    <Between a={join(FAST)} b={SLOW} from={125} to={1372} above="#00800026" below="#ff303030" />
    {LEVELS.map(([y, x, w, c]) => (
      <g key={y}>
        <line x1={x} x2="1568" y1={y} y2={y} stroke={c} strokeWidth={w + 1} strokeOpacity="0.3" />
        <line x1={x} x2="1568" y1={y} y2={y} stroke={c} strokeWidth={Math.max(2, w - 1)} />
      </g>
    ))}
    <Segments segs={TREND} width={4} dash="7 7" />
    <polyline points={str(SLOW)} fill="none" stroke="#a01010" strokeWidth="1.5" strokeDasharray="5 3" />
    <g shapeRendering="crispEdges">
      {CANDLES.map((k) => (
        <g key={k.x}>
          <line x1={k.x + 0.5} x2={k.x + 0.5} y1={k.hi} y2={k.lo} stroke="#444" />
          <rect x={k.x - 1.5} y={k.top + 0.5} width="4" height={Math.max(1, k.bot - k.top)} fill={CANDLE_COLORS[k.c]} stroke="#1a1a1a" />
        </g>
      ))}
    </g>
    <Segments segs={FAST} width={3} />

    <g stroke="#000" strokeWidth="2" strokeDasharray="2 4" fill="none">
      <path d="M620 400L774 98M1303 399L1457 98M60 519L300 469M523 362L541 392M1517 351L1568 345" />
    </g>
    <path d="M780 88L771 94L780 99ZM1464 89L1455 95L1465 99ZM299 463L309 467L300 473ZM540 397L549 391L549 403Z" />

    <g fill={GREEN}>
      <text x="464" y="96">11.574,8</text>
      <text x="476" y="233">9.924,7</text>
      <text x="594" y="225">10.028,1</text>
      <text x="481" y="285">9.299,4</text>
      <text x="542" y="280">9.365,0</text>
      <text x="493" y="326">8.809,7</text>
      <text x="502" y="334">8.720,4</text>
      <text x="978" y="174">10.637,5</text>
      <text x="368" y="419">7.686,7</text>
      <text x="371" y="422">7.630,7</text>
      <text x="25" y="412" fill="#22a022">7.770,2</text>
    </g>
    <text x="969" y="408" fill="#3838c8">61,80 %</text>
    <text x="969" y="483" fill="#70d870">76,40 %</text>
    <text x="740" y="494" fill="#ff7f40">50,00 %</text>
    <text x="160" y="527" fill="#dddd00">23,60 %</text>

    {FIBS.map(([y, t, c]) => (
      <g key={y}>
        <rect x="509.5" y={y - 6.5} width="38" height="13" fill="none" stroke={c} />
        <text x="512" y={y + 3} fill={c}>{t}</text>
        <line x1="550" x2="567" y1={y + 6} y2={y + 6} stroke={c} strokeDasharray="4 3" />
      </g>
    ))}

    <Tag x={22} y={461} w={38} text="423,60 %" color="#888" border="#888" />
    <Tag x={22} y={465} w={31} text="7.108,0" color={GREEN} border={GREEN} />
    <line x1="23" x2="62" y1="470" y2="470" stroke={GREEN} strokeWidth="3" />
    <text x="25" y="477" fill="#559055">361,80 %</text>
    <Tag x={22} y={486} w={38} text="323,60 %" color="#109010" border="#109010" />
    <Tag x={22} y={506} w={38} text="261,80 %" color="#60f060" border="#60f060" />
    <Tag x={22} y={519} w={38} text="223,60 %" color="#8000c0" border="#8000c0" />
    <text x="25" y="522" fill="#ff0000">6.438,1</text>
    <text x="25" y="532" fontSize="9" fontWeight="normal">IT-Finance.com - Tiempo Real</text>
    <path d="M23 525H130M23 530H130" stroke="#f00" strokeWidth="2" strokeOpacity="0.6" />

    <g fontWeight="normal" fill="#222">
      {([[462, 84, "(v)", 17], [484, 67, "(1)", 17], [527, 440, "(2) ?", 24], [1237, 438, "(2) ?", 24]] as [number, number, string, number][]).map(([x, y, t, w]) => (
        <g key={x}>
          <rect x={x - w / 2} y={y - 8} width={w} height="16" rx="2" fill="#fff" stroke="#78a0f0" />
          <text x={x} y={y + 3} textAnchor="middle">{t}</text>
        </g>
      ))}
    </g>

    <g fontSize="33">
      <text x="31" y="61">CL, 4h</text>
      <text x="31" y="99">Crudo EE.UU. (1€)</text>
    </g>

    <Axis ticks={[[22, "12.500"], [62, "12.000"], [104, "11.500"], [146, "11.000"], [188, "10.500"], [230, "10.000"], [312, "9.000"], [354, "8.500"], [395, "8.000"], [437, "7.500"], [478, "7.000"], [520, "6.500"]]}>
      <Tag x={1572} y={273} w={30} text="9.453,5" color="#2a6a2a" />
      <Tag x={1572} y={283} w={30} text="9.377,3" color="#b01010" />
      <Tag x={1572} y={308} w={30} text="9.052,1" color="#0000b0" />
    </Axis>
  </Panel>
);

const TrainPanel = () => (
  <Panel top={534} height={95} grow="flex-[95_1_0px]" title="Sistema de trenes Doc v4 (f f)" swatch="bg-linear-to-r from-[#7f9099] to-black">
    <Grid top={534} bottom={629} rows={[575, 592]} />
    <rect x="23" y="543" width="1351" height="16" fill="#d9f5d9" />
    <rect x="23" y="608" width="1351" height="17" fill="#ffdbd8" />
    <g stroke="#222" shapeRendering="crispEdges">
      <path d="M23 542.5H1374M23 558.5H1374M23 608.5H1374M23 624.5H1374" />
    </g>
    <line x1="23" x2="1374" y1="583" y2="583" stroke="#000099" strokeWidth="1.5" strokeDasharray="5 4" />
    <clipPath id="overbought"><rect x="23" y="542" width="1351" height="16" /></clipPath>
    <clipPath id="oversold"><rect x="23" y="609" width="1351" height="16" /></clipPath>
    <polygon points={`23,559 ${str(TRAIN_PTS)} 1374,559`} fill="#007000" fillOpacity="0.45" clipPath="url(#overbought)" />
    <polygon points={`23,608 ${str(TRAIN_PTS)} 1374,608`} fill="#900000" fillOpacity="0.5" clipPath="url(#oversold)" />
    <Between a={TRAIN_PTS} b={TRAIN_LAG} from={23} to={1372} above="#3030c040" below="#e050e055" />
    <polyline points={str(lag(OSC, 8))} fill="none" stroke="#1a5a1a" strokeDasharray="3 2" />
    <TwoTone pts={OSC} up="#000000" down="#d01818" width={1.4} />
    <polyline points={str(TRAIN_LAG)} fill="none" stroke="#111" strokeWidth="2.4" strokeDasharray="5 5" />
    <Segments segs={TRAIN} width={3} colors={{ r: "#ff0000", b: "#000099" }} />
    <Triangles at={OSC_DOWN} dir="down" fill="#b00010" />
    <Triangles at={OSC_UP} dir="up" fill="#0000b4" />
    <Axis ticks={[]}>
      <Tag x={1572} y={542} w={14} text="100" color="#222" />
      <Tag x={1572} y={555} w={10} text="80" color="#222" />
      <text x="1573" y="578" fill="#222">60</text>
      <Tag x={1572} y={562} w={25} text="76,424" color="#222" />
      <Tag x={1572} y={568} w={25} text="74,861" color="#ee1010" />
      <Tag x={1572} y={581} w={10} text="50" color="#0000b0" />
      <Tag x={1572} y={590} w={25} text="41,964" color="#222" />
      <Tag x={1572} y={596} w={25} text="35,809" color="#ee1010" />
      <Tag x={1572} y={608} w={10} text="20" color="#222" />
      <Tag x={1572} y={622} w={6} text="0" color="#222" />
    </Axis>
  </Panel>
);

const WillyPanel = () => (
  <Panel top={629} height={72} grow="flex-[72_1_0px]" title="Willy Doc (t)" swatch="bg-[#75898f]">
    <Grid top={629} bottom={701} rows={[648, 673, 686]} />
    <g shapeRendering="crispEdges">
      {WILLY_BANDS.map(([c, list]) =>
        list.split(" ").map((r) => {
          const [a, b] = r.split("-").map(Number);
          return <rect key={r} x={a} y="629" width={b - a} height="72" fill={c} />;
        })
      )}
      <path d="M23 635.5H1374M23 698.5H1374" stroke="#222" strokeDasharray="4 4" />
    </g>
    <clipPath id="willyTop"><rect x="23" y="630" width="1351" height="21" /></clipPath>
    <clipPath id="willyLow"><rect x="23" y="683" width="1351" height="17" /></clipPath>
    <polygon points={`23,650 ${str(WILLY_PTS)} 1374,650`} fill="#007000" fillOpacity="0.42" clipPath="url(#willyTop)" />
    <polygon points={`23,683 ${str(WILLY_PTS)} 1374,683`} fill="#900000" fillOpacity="0.5" clipPath="url(#willyLow)" />
    <line x1="23" x2="1374" y1="650.5" y2="650.5" stroke="#000099" strokeWidth="1.5" />
    <line x1="23" x2="1374" y1="666.5" y2="666.5" stroke="#000099" strokeWidth="1.5" strokeDasharray="5 4" />
    <line x1="23" x2="1374" y1="682.5" y2="682.5" stroke="#cc0000" strokeWidth="1.5" />
    <Segments segs={WILLY} width={3} colors={{ d: "#990000", b: "#0000cc", o: "#ff9900", g: "#00cc00" }} />
    <Triangles at="275,665 289,665 476,665 551,665 576,665 607,665 706,665 738,665 828,665 920,665 1020,665 1110,665 1122,665" dir="down" fill="#b00010" size={6} />
    <Triangles at="120,667 280,667 297,667 541,667 562,667 571,667 711,667 816,667 833,667 925,667 1104,667 1115,667 1287,667" dir="up" fill="#0000b4" size={6} />
    <Axis ticks={[[672, "-60"]]}>
      <Tag x={1572} y={635} w={6} text="0" color="#222" />
      <Tag x={1572} y={647} w={28} text="-19,561" color="#00c000" />
      <Tag x={1572} y={654} w={13} text="-25" color="#0000b0" />
      <Tag x={1572} y={667} w={13} text="-50" color="#0000b0" />
      <Tag x={1572} y={682} w={13} text="-75" color="#d01010" />
      <Tag x={1572} y={695} w={17} text="-100" color="#222" />
    </Axis>
  </Panel>
);

const AwesomePanel = () => (
  <Panel top={701} height={83} grow="flex-[83_1_0px]" title="Awesome Evolution Doc" swatch="bg-[#75898f]">
    <Grid top={701} bottom={784} rows={[720, 739, 775]} />
    {range(25, 1374, 4).map((x) => {
      const y = at(AO, x);
      const rising = at(AO, x + 3) <= at(AO, x - 3);
      const fill = y < 757.5 ? (rising ? "#0000e0" : "#f000f0") : rising ? "#108080" : "#f01010";
      return <line key={x} x1={x} x2={x} y1={y} y2="757.5" stroke={fill} strokeWidth="3" />;
    })}
    {range(470, 500, 4).map((x) => <line key={x} x1={x + 2} x2={x + 2} y1={at(AO_SIGNAL, x)} y2={at(AO, x)} stroke="#ffc0c0" />)}
    <line x1="23" x2="1374" y1="757.5" y2="757.5" stroke="#0000cc" strokeWidth="1.5" />
    <TwoTone pts={AO} up="#000038" down="#b000b0" width={3} />
    <TwoTone pts={AO_SIGNAL} up="#60ff60" down="#ff9900" width={3} />
    <Triangles at="101,758 161,752 345,749 375,749 471,721 605,747 650,750 700,751 735,747 872,745 981,749 1007,750 1092,757 1116,764 1186,764 1229,763 1339,749 1356,747" dir="down" fill="#f0f000" />
    <Triangles at="58,759 110,758 289,758 358,750 445,742 535,764 668,750 718,751 756,764 801,764 951,756 1003,751 1056,773 1138,759 1178,764 1195,764 1243,764 1347,748" dir="up" fill="#00f0ff" />
    <Axis ticks={[[706, "3.000"], [720, "2.000"], [738, "1.000"], [775, "-1.000"]]}>
      <Tag x={1572} y={744} w={25} text="488,08" color="#ee1010" />
      <Tag x={1572} y={750} w={25} text="460,26" color="#ff9900" />
      <Tag x={1572} y={756} w={25} text="-9,971" color="#f000f0" />
      <Tag x={1572} y={763} w={6} text="0" color="#f000f0" />
    </Axis>
  </Panel>
);

const ForcePanel = () => (
  <Panel top={784} height={47} grow="flex-[47_1_0px]" title="Barra Fuerza Fondo Mercado v4 (f)" swatch="bg-linear-to-r from-black to-[#7f9099]">
    <Grid top={784} bottom={831} rows={[809]} />
    <g shapeRendering="crispEdges">
      {FORCE_BG.slice(0, -1).map(([c, x], i) => <rect key={x} x={x} y="785" width={FORCE_BG[i + 1][1] - x} height="45" fill={FORCE_COLORS[c]} />)}
      {range(24, 1374, 4.36).map((x) => {
        const y = at(FORCE, x);
        const rising = at(FORCE, x + 5) < at(FORCE, x - 1) - 0.2 || (y > 822 && Math.sin(x / 13) > 0.75);
        return <rect key={x} x={x} y={y} width="4.36" height={830 - y} fill={rising ? "#2020d0" : "#cc2828"} fillOpacity="0.75" stroke={rising ? "#000080" : "#801010"} strokeOpacity="0.6" />;
      })}
    </g>
    <line x1="23" x2="1376" y1="824" y2="824" stroke="#300030" />
    <Axis ticks={[[788, "4"], [809, "2"]]}>
      <Tag x={1572} y={819} w={25} text="0,5000" color="#222" />
      <Tag x={1572} y={825} w={25} text="0,3896" color="#dd1010" />
    </Axis>
  </Panel>
);

const TimeAxis = () => (
  <svg className="block min-h-0 w-full flex-[12_1_0px] bg-white" viewBox="23 831 1577 12" preserveAspectRatio="none" fontFamily="Liberation Sans, sans-serif" fontSize="8" fontWeight="bold" textAnchor="middle">
    {DAYS.map(([x, t]) => (
      <g key={x}>
        <line x1={x + 0.5} x2={x + 0.5} y1="831" y2="833" stroke="#78909c" />
        <text x={x} y="841" fill="#222">{t}</text>
      </g>
    ))}
  </svg>
);

/* ---------- toolbars ---------- */

const Sep = () => <span className="h-full w-px shrink-0 bg-[#7f9ba9]" />;

const Frame = ({ label, on }: { label: string; on?: boolean }) => (
  <button className={`flex h-[13px] items-center rounded-xs border border-[#85a2b0] px-px ${on ? "bg-[#8ba3af]" : "bg-[#aecbd8]"}`}>{label}</button>
);

const Drop = ({ label, className = "" }: { label: string; className?: string }) => (
  <button className={`flex shrink-0 items-center justify-between whitespace-nowrap ${className}`}>{label}<ChevronDown className="h-2 w-2 shrink-0" strokeWidth={3} /></button>
);

const TopBar = () => (
  <header className="flex h-[19px] shrink-0 items-center border-t border-b border-[#4d6470] bg-linear-to-b from-[#b6d3e0] to-[#9cb9c6]">
    <button aria-label="Gráfico" className="flex w-5 justify-center">
      <svg className="h-3 w-3" viewBox="0 0 12 12"><path d="M2.5 5v6M6 3v6M9.5 1v7" stroke="#1c7a1c" /><path d="M1.5 6h2v4h-2zM5 4h2v4H5zM8.5 2h2v4h-2z" fill="#3aa83a" /></svg>
    </button>
    <button aria-label="Vincular" className="flex w-[11px] justify-center">
      <svg className="h-3 w-2" viewBox="0 0 8 12" fill="none" stroke="#5d707a"><path d="M1 1h2v3H1zM5 1h2v3H5zM1 7h2v3H1zM5 7h2v3H5z" /></svg>
    </button>
    <Sep />
    <Drop label="CL" className="w-[26px] pl-1" />
    <div className="flex h-full items-center gap-[3px] px-[3px]">
      <Sep />
      {["12s", "144s", "1m", "12m", "56m", "1h", "4h", "D", "W", "M", "Q"].map((t) => <Frame key={t} label={t} on={t === "4h"} />)}
    </div>
    <Sep />
    <Drop label="4 horas" className="w-[43px] px-[3px]" />
    <Sep />
    <div className="flex items-center gap-[3px] px-[3px]">
      {["5kU", "10kU", "35kU"].map((t) => <Frame key={t} label={t} on={t === "10kU"} />)}
    </div>
    <Sep />
    <Drop label="10 k unidades" className="w-[68px] px-[3px]" />
    <Sep />
    <button className="flex w-[68px] shrink-0 items-center gap-[3px] pl-[3px] whitespace-nowrap">
      <svg className="h-3.5 w-3.5 shrink-0" viewBox="0 0 14 14" fill="none"><path d="M0 3c3-3 5-1 7 3s4 3 7-1" stroke="#d02020" /><path d="M0 7c3 1 5-5 8-5s3 3 6 4" stroke="#208020" /><path d="M1 14v-2h3v-1h2v1h3v-2h2v1h2v3z" fill="#00b020" /></svg>
      Indicadores
    </button>
    <Sep />
    <button aria-label="Más indicadores" className="flex w-3.5 justify-center"><ChevronDown className="h-2 w-2" strokeWidth={3} /></button>
    <Sep />
    <button aria-label="Información" className="mr-[3px] ml-1.5 flex h-2.5 w-2 items-center justify-center bg-white text-[#777]">i</button>
    <span className="mx-[3px] h-1.5 w-1.5 rounded-full bg-[#777]" />
    <span className="mx-[3px] flex h-3 w-8 items-center justify-center rounded-xs bg-[#f04848] font-normal whitespace-nowrap text-white">-2,38 %</span>
    <span>24 abr 2026</span>
    <span className="ml-[3px] font-normal">Crudo EE.UU. (1€)</span>
    <div className="ml-auto flex h-full items-center text-[#5a737f]">
      <Sep />
      <button aria-label="Actualizar" className="flex w-[18px] justify-center">
        <svg className="h-3.5 w-3.5" viewBox="0 0 14 14" fill="none" strokeWidth="2"><path d="M9 2C5 1 3 4 3 8" stroke="#e83030" /><path d="M0 7h6L3 11z" fill="#e83030" /><path d="M5 12c4 1 6-2 6-6" stroke="#20b020" /><path d="M8 7h6l-3-4z" fill="#20b020" /></svg>
      </button>
      <Sep />
      <button aria-label="Minimizar" className="flex w-3 justify-center"><Minus className="h-2 w-2" strokeWidth={4} /></button>
      <button aria-label="Restaurar" className="flex w-3 justify-center"><Copy className="h-2 w-2" strokeWidth={3} /></button>
      <button aria-label="Cerrar" className="flex w-3.5 justify-center"><X className="h-2.5 w-2.5" strokeWidth={3} /></button>
    </div>
  </header>
);

const PageIcon = ({ color, d }: { color: string; d: string }) => (
  <svg className="h-2.5 w-2.5" viewBox="0 0 10 10"><path d="M1 .5h6l2 2v7H1z" fill="#fff" stroke="#a0b0b8" /><path d={d} stroke={color} strokeWidth="2" fill="none" /></svg>
);

const Legend = () => (
  <div className="absolute top-0 left-0 flex h-[13px] items-center border-b border-[#8ea3ae] bg-[#cddde4]">
    <button aria-label="Quitar panel" className="flex w-3 justify-center"><PageIcon color="#e02020" d="M5 2v6M2 5h6" /></button>
    <button aria-label="Añadir panel" className="flex w-3 justify-center"><PageIcon color="#10a010" d="M5 8V2M2 5h6" /></button>
    <button aria-label="Cerrar panel" className="flex w-[13px] justify-center"><CloseDot /></button>
    {[
      ["Precio", "border border-[#778] bg-[#dde8ec]"],
      ["", ""],
      ["Cierre (W)", "border border-[#778] bg-[#dde8ec]"],
      ["Tunel Domenec v4 (t t t t t)", "bg-[#75898f]"],
      ["Control Total Doc v.6", "bg-linear-to-r from-[#d02020] via-[#302090] to-[#20a060]"],
      ["Multi Avisos (3 f 3 1,5 70 f f)", "bg-black"],
      ["DS_CotasHist (1 t t t 3 1 1 f f f f f f f f ...)", "border border-[#778] bg-[#dde8ec]"],
    ].map(([label, swatch]) => (
      <button key={label} className="flex h-full items-center gap-[3px] border-l border-[#8ea3ae] px-0.5 whitespace-nowrap">
        {label ? <span className={`h-[7px] w-[7px] ${swatch}`} /> : <List className="h-2 w-2" strokeWidth={3} aria-label="Lista" />}
        {label}
      </button>
    ))}
  </div>
);

const Ico = ({ children }: { children: ReactNode }) => <svg className="h-3.5 w-3.5 shrink-0" viewBox="0 0 16 16" fill="none">{children}</svg>;
const Ray = ({ color }: { color: string }) => <Ico><circle cx="7" cy="8" r="1.5" stroke={color} /><path d="M8 8h8" stroke={color} strokeWidth="1.5" /></Ico>;
const Diagonal = ({ color }: { color: string }) => <Ico><path d="M0 16L16 0" stroke={color} strokeWidth="1.3" /></Ico>;
const Level = ({ color }: { color: string }) => <Ico><path d="M0 8h16" stroke={color} strokeWidth="1.3" /></Ico>;
const Corners = () => <path d="M0 12.5h3M1.5 11v3M13 3h3M14.5 1.5v3" stroke="#0000ee" strokeWidth="1.3" />;
const Oval = ({ stroke, fill }: { stroke: string; fill: string }) => <Ico><ellipse cx="8" cy="8" rx="6" ry="4" stroke={stroke} fill={fill} strokeWidth="1.3" transform="rotate(-12 8 8)" /><Corners /></Ico>;
const Box = ({ stroke, fill }: { stroke: string; fill: string }) => <Ico><rect x="2.5" y="4" width="11" height="8" stroke={stroke} fill={fill} /><Corners /></Ico>;
const Bell = ({ extra }: { extra: ReactNode }) => <Ico><path d="M2 13c3-2 1-9 6-10 5 1 3 8 6 10z" fill="#f5e020" stroke="#8a7a10" strokeWidth=".8" /><circle cx="8" cy="14" r="1.2" fill="#b09010" />{extra}</Ico>;

const TOOLS: [string, ReactNode][] = [
  ["Cursor", <MousePointer2 className="h-3 w-3 fill-white text-[#555]" />],
  ["Lupa", <Ico><circle cx="6.5" cy="6" r="4" stroke="#333" fill="#c4dbe6" strokeWidth="1.2" /><path d="M9.5 9l4.5 5" stroke="#222" strokeWidth="2.2" /></Ico>],
  ["Zoom de zona", <Ico><rect x="1" y="5" width="8" height="8" stroke="#2060d0" strokeDasharray="2 1" /><circle cx="9" cy="6" r="4" stroke="#333" fill="#c4dbe6" /><path d="M12 9l3 4" stroke="#222" strokeWidth="2" /></Ico>],
  ["Alerta en gráfico", <Bell extra={<><path d="M8 2l3 3 4-4" stroke="#2030e0" strokeWidth="1.3" /><path d="M11 5v8l2-2h3z" fill="#fff" stroke="#777" strokeWidth=".7" /></>} />],
  ["Alertas", <Bell extra={<path d="M2 2L0 6M14 2l2 4" stroke="#555" />} />],
  ["Fibonacci", <Ico><path d="M2 8L4 2l2 6 3 2h5" stroke="#222" /><path d="M0 7h4M2 5v4M12 15V9h4M12 12h3" stroke="#0000e0" strokeWidth="1.5" /><path d="M5 6h10" stroke="#e09060" /></Ico>],
  ["Extensión", <Ico><path d="M3 4h12" stroke="#e05030" strokeDasharray="2 1" /><path d="M3 7h8" stroke="#6090e0" /><path d="M12 14V8h4M12 11h3" stroke="#0000e0" strokeWidth="1.5" /></Ico>],
  ["Rectángulo azul", <Box stroke="#6a9aee" fill="none" />],
  ["Rectángulo rojo", <Box stroke="#e02030" fill="#c090a0" />],
  ["Flecha", <Ico><circle cx="3" cy="13" r="1.5" stroke="#111" /><path d="M4 12l8-8" stroke="#111" strokeWidth="2" /><path d="M8 2h7v7z" fill="#111" /></Ico>],
  ["Texto", <Ico><path d="M1.5 1.5h13v10l-3 3h-10z" stroke="#6a9aee" fill="#a8c8ec" /><path d="M4.5 5h7M8 5v7" stroke="#222" strokeWidth="2" /></Ico>],
  ["Comentario", <Ico><circle cx="8" cy="8" r="6.5" stroke="#6a9aee" fill="#a8c8ec" /><path d="M4.5 5h7M8 5v7" stroke="#187818" strokeWidth="2" /></Ico>],
  ["Segmento", <Ico><circle cx="3.5" cy="12.5" r="1.5" stroke="#222" /><circle cx="12.5" cy="3.5" r="1.5" stroke="#222" /><path d="M4.5 11.5l7-7" stroke="#222" strokeWidth="1.3" /></Ico>],
  ["Semirrecta clara", <Ray color="#70e070" />],
  ["Semirrecta verde", <Ray color="#28a028" />],
  ["Semirrecta oscura", <Ray color="#0a7a0a" />],
  ["Semirrecta roja", <Ray color="#e01010" />],
  ["Regla", <Ruler className="h-3.5 w-3.5 -scale-x-100 text-[#4d626c]" strokeWidth={1.5} />],
  ["Canal", <Ico><path d="M1 3h14v5H1z" fill="#9ecb9f" /><path d="M1 8h14v6H1z" fill="#c0a8b8" /><path d="M1 12l4-4 2 2 4-5 1 3 3-3" stroke="#b8c8f8" /><path d="M1 3h14" stroke="#40a040" strokeDasharray="1 1" /><path d="M1 14h14" stroke="#d04040" strokeDasharray="1 1" /></Ico>],
  ["Elipse roja", <Oval stroke="#e02030" fill="#c090a0" />],
  ["Elipse marrón", <Oval stroke="#705040" fill="#9098a0" />],
  ["Elipse verde", <Oval stroke="#107a30" fill="#60a878" />],
  ["Elipse clara", <Oval stroke="#20e040" fill="#60c080" />],
  ["Línea negra", <Diagonal color="#333" />],
  ["Línea verde", <Diagonal color="#28a028" />],
  ["Línea roja", <Diagonal color="#ff0000" />],
  ["Nivel negro", <Level color="#222" />],
  ["Nivel salmón", <Level color="#ff8060" />],
  ["Nivel claro", <Level color="#00f020" />],
  ["Nivel verde", <Level color="#087808" />],
  ["Nivel rojo", <Level color="#e01010" />],
  ["Nivel azul", <Level color="#6090f0" />],
  ["Nivel marino", <Level color="#0000aa" />],
  ["Vertical", <Ico><path d="M8 0v16" stroke="#333" strokeWidth="1.3" /></Ico>],
  ["Ángulo", <Ico><path d="M13 2L1 12h11" stroke="#e04040" /><path d="M7 12c0-2 0-3-1-4" stroke="#e04040" /><circle cx="13.5" cy="8" r="2" stroke="#2040e0" strokeWidth="1.3" /></Ico>],
  ["Ciclo", <Ico><circle cx="7" cy="9" r="6" stroke="#e08040" strokeWidth="1.3" /><path d="M7 7v4M5 9h4M12 2v4M10 4h4" stroke="#2040e0" strokeWidth="1.3" /></Ico>],
  ["Ondas mayores", <Ico><path d="M1 5h4M3 3v4M6 9h4M8 7v4M11 3h4M13 1v4M2 13h3M7 14h4M12 9h4M14 7v4" stroke="#2040e0" strokeWidth="1.3" /><path d="M2 10l5-7 3 3" stroke="#6080e0" strokeWidth=".7" /></Ico>],
  ["Ondas menores", <Ico><path d="M2 12l4-8 3 7" stroke="#6080e0" strokeWidth=".8" /><path d="M0 12h4M2 10v4M9 4h3M12 3v4h3M13 11v4M11 13h4" stroke="#2040e0" strokeWidth="1.3" /></Ico>],
  ["Aceptar", <Check className="h-3.5 w-3.5 text-[#28a038]" strokeWidth={5} />],
  ["Me gusta", <ThumbsUp className="h-3.5 w-3.5 fill-[#30b040] text-[#208030]" strokeWidth={1.5} />],
  ["Borrar", <X className="h-4 w-4 text-[#ee1111]" strokeWidth={6} />],
];

const ToolColumn = () => (
  <aside className="flex w-[23px] shrink-0 flex-col border-r border-l-2 border-[#6d8794] border-l-[#5c7380] bg-[#9bb9c6]">
    <button aria-label="Subir" className="flex h-[11px] items-center justify-center"><ChevronUp className="h-2 w-3" /></button>
    <div className="flex min-h-0 flex-1 flex-col">
      {TOOLS.map(([name, icon], i) => (
        <button key={name} aria-label={name} className={`flex min-h-0 flex-1 items-center justify-center ${i === 0 ? "rounded-xs border border-[#7a95a3] bg-[#a8b8c0]" : ""}`}>{icon}</button>
      ))}
    </div>
    <div className="mt-1.5 flex flex-col items-center">
      <button aria-label="Bajar" className="flex h-2.5 w-full items-center justify-center border border-[#7a95a3] bg-[#b4cfdb]"><ChevronDown className="h-2 w-3" /></button>
      <button aria-label="Propiedades" className="my-1 h-5">
        <Ico><path d="M5 6h9v9H5z" fill="#e8eef0" stroke="#555" /><path d="M7 12l2-3 2 2 2-3" stroke="#c02020" /><circle cx="4" cy="4" r="3" fill="#108020" /><path d="M4 2.5v3" stroke="#fff" /><path d="M10 13h5" stroke="#222" strokeWidth="2" /></Ico>
      </button>
      <button aria-label="Más" className="h-5"><Ellipsis className="h-3.5 w-3.5" strokeWidth={3} /></button>
    </div>
  </aside>
);

const BottomBar = () => (
  <footer className="flex h-[17px] shrink-0 items-center border-t border-[#6d8794] bg-[#9bb9c6]">
    <button aria-label="Dibujar" className="flex w-[23px] justify-center"><Ico><path d="M3 14l-1-10M5 14L13 3M3 14h6" stroke="#5a4020" strokeWidth="1.5" /><path d="M5 12l8-9" stroke="#e0a020" strokeWidth="2" /><path d="M2 2l4 10" stroke="#309040" /></Ico></button>
    <button aria-label="Compartir" className="flex w-[17px] justify-center"><Share2 className="h-3 w-3 fill-white text-[#f4f8fa]" /></button>
    <button aria-label="Chat" className="flex w-[18px] justify-center"><Ico><path d="M1 3h9v6H4l-2 2V9H1z" fill="#3a78d8" /><path d="M6 6h9v6h-2v2l-2-2H6z" fill="#6aa0ee" stroke="#2050a0" strokeWidth=".6" /></Ico></button>
    <button aria-label="Órdenes" className="flex w-[18px] justify-center"><Ico><path d="M3 2h10v12H3z" fill="#f0f4f0" stroke="#444" /><path d="M5 5h3M5 8h3M5 11h3" stroke="#108030" strokeWidth="2" /><path d="M9 5h3M9 8h3M9 11h3" stroke="#d03030" strokeWidth="2" /></Ico></button>
    <button aria-label="Profundidad" className="flex w-[17px] justify-center"><Ico><path d="M2 2h6v3H2zM3 6h5v3H3zM1 10h7v4H1z" fill="#18a838" /><path d="M8 3h4v3H8zM8 7h6v3H8zM8 11h4v2H8z" fill="#e03838" /></Ico></button>
    <button aria-label="Ventanas" className="flex w-[17px] justify-center"><Ico><path d="M1 2h9v7H1z" fill="#e0ecf8" stroke="#2060b0" /><path d="M5 6h10v8H5z" fill="#fff" stroke="#2060b0" strokeWidth="1.5" /><path d="M6 12l3-3 2 2 3-3" stroke="#18a038" /></Ico></button>
    <button aria-label="Plegar" className="flex w-3 justify-center"><ChevronsLeft className="h-3 w-3" strokeWidth={1.5} /></button>
    <button aria-label="Anterior" className="flex h-[11px] w-3 items-center justify-center rounded-xs border border-[#7a95a3] bg-[#b4cfdb]"><ChevronLeft className="h-2 w-2" strokeWidth={4} /></button>
    <div className="flex h-[11px] flex-1 border border-[#7a95a3] bg-[#9ab6c3]">
      <span className="flex-[1252_1_0px]" />
      <span className="flex-[42_1_0px] border-x border-[#7a95a3] bg-[#b4d2df]" />
      <span className="flex-[33_1_0px]" />
    </div>
    <button aria-label="Siguiente" className="flex h-[11px] w-3 items-center justify-center rounded-xs border border-[#7a95a3] bg-[#b4cfdb]"><ChevronRight className="h-2 w-2" strokeWidth={4} /></button>
    <div className="flex items-center *:flex *:w-[18px] *:justify-center">
      <button aria-label="Deshacer"><Undo2 className="h-3 w-3 text-[#6a9ccc]" strokeWidth={3} /></button>
      <button aria-label="Rehacer"><Redo2 className="h-3 w-3 text-[#6a9ccc]" strokeWidth={3} /></button>
      <button aria-label="Herramientas"><Ico><path d="M8 2h6v12H8z" fill="#20b040" /><path d="M2 14l7-7" stroke="#d03030" strokeWidth="3" /><path d="M9 3l1 4 4-1" stroke="#eee" strokeWidth="2" /></Ico></button>
      <button aria-label="Ajustar"><Ico><circle cx="7" cy="6" r="4.5" stroke="#223" fill="#b8d4e0" /><path d="M10 10l4 4" stroke="#111" strokeWidth="2" /><path d="M14 1v7M1 14h8" stroke="#1030e0" strokeWidth="1.5" /></Ico></button>
      <button aria-label="Alejar"><ZoomOut className="h-3 w-3 fill-[#e4eefa] text-[#112]" strokeWidth={2.5} /></button>
      <button aria-label="Acercar"><ZoomIn className="h-3 w-3 fill-[#e4eefa] text-[#112]" strokeWidth={2.5} /></button>
      <button aria-label="Compactar"><Ico><path d="M1 5h14" stroke="#222" strokeWidth="2" strokeDasharray="3 1" /><path d="M8 7v6M5 10l3 3 3-3" stroke="#1030e0" strokeWidth="1.5" /></Ico></button>
    </div>
  </footer>
);

export default function App() {
  return (
    <div className="flex h-screen flex-col overflow-hidden bg-[#9bb9c6] font-['Liberation_Sans',sans-serif] text-[8px] leading-3 font-bold text-[#111]">
      <TopBar />
      <div className="flex min-h-0 flex-1">
        <ToolColumn />
        <main className="relative flex min-w-0 flex-1 flex-col">
          <PricePanel />
          <TrainPanel />
          <WillyPanel />
          <AwesomePanel />
          <ForcePanel />
          <TimeAxis />
          <Legend />
        </main>
      </div>
      <BottomBar />
    </div>
  );
}
